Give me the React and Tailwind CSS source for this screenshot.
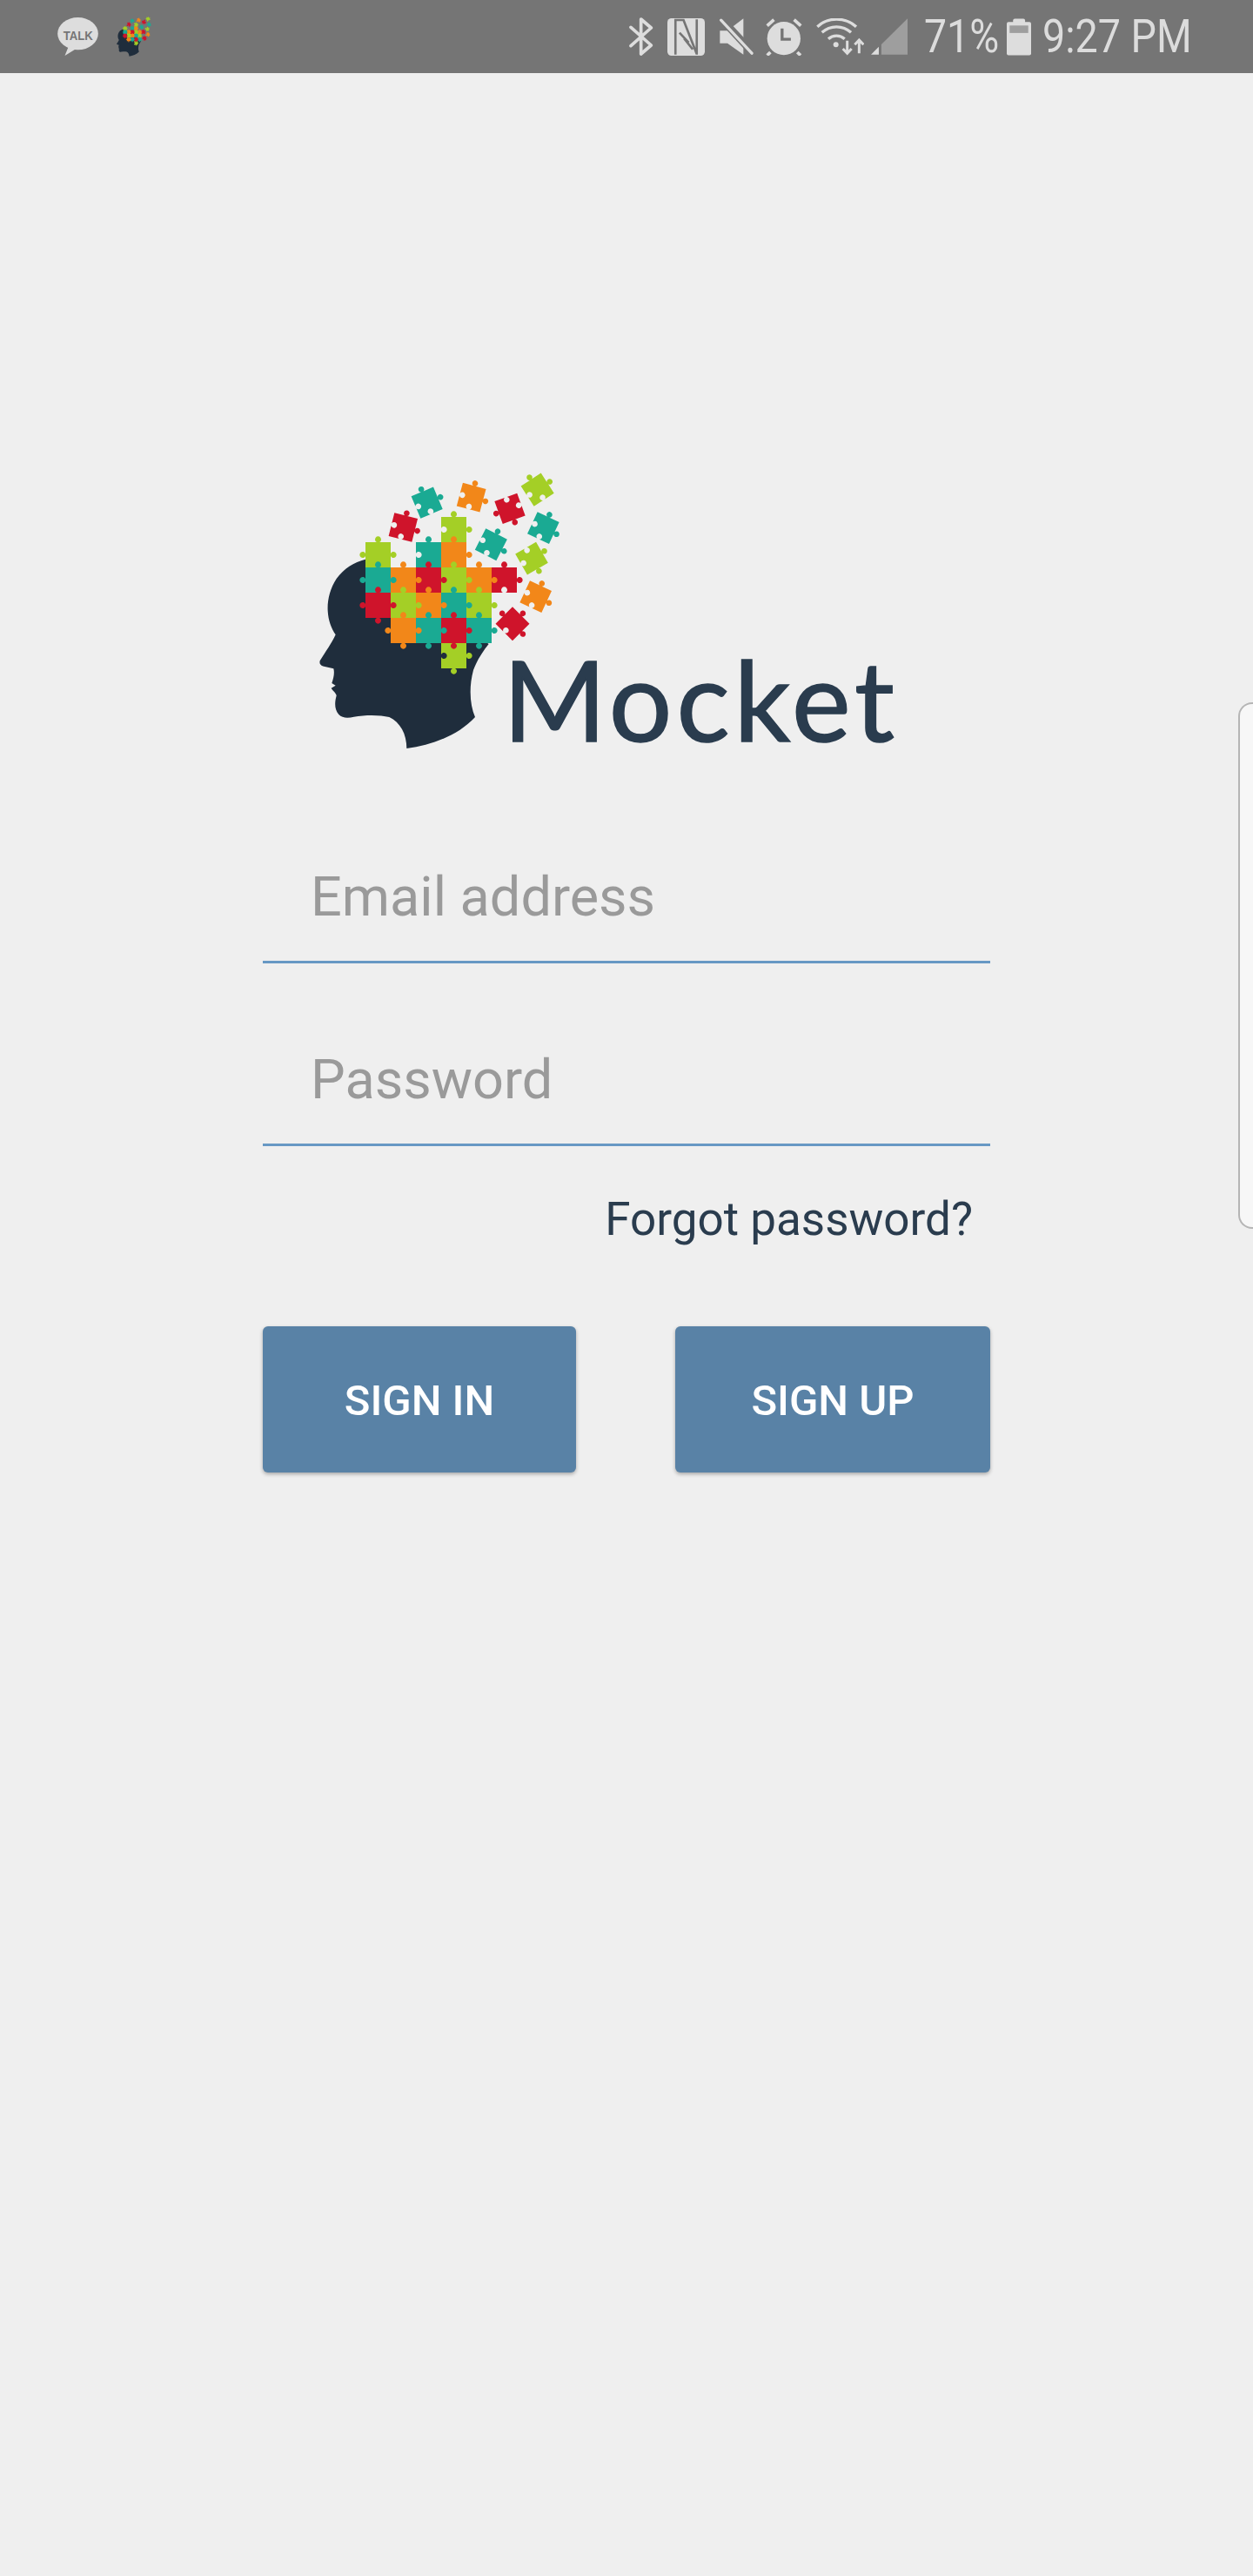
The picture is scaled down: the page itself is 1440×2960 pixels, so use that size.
const BAR = "#757575";
const ICON = "#dddddd";
const DIM = "#9e9e9e";
const TEAL = "#1aaa93";
const LIME = "#a4cf26";
const ORANGE = "#f28719";
const RED = "#cf142b";
const CELL = 87;

// puzzle piece centred on 0,0. each edge is k (knob), n (notch) or f (flat)
function piecePath(t, r, b, l) {
  const h = CELL / 2;
  const n = 4.5;
  const k = 10.5;
  const arc = (type, x, y) =>
    type === "f"
      ? `L${x} ${y}`
      : `A${k} ${k} 0 1 ${type === "k" ? 1 : 0} ${x} ${y}`;
  return [
    `M${-h} ${-h}`,
    `L${-n} ${-h}`,
    arc(t, n, -h),
    `L${h} ${-h}`,
    `L${h} ${-n}`,
    arc(r, h, n),
    `L${h} ${h}`,
    `L${n} ${h}`,
    arc(b, -n, h),
    `L${-h} ${h}`,
    `L${-h} ${n}`,
    arc(l, -h, -n),
    "Z",
  ].join(" ");
}

// x, y = top-left corner of the cell in the logo's coordinates
const GRID = [
  [501, 222, LIME, "kkfn"],
  [240, 309, LIME, "kkfk"],
  [414, 309, TEAL, "kkfn"],
  [501, 309, ORANGE, "kkff"],
  [675, 396, RED, "kknf"],
  [588, 396, ORANGE, "kkff"],
  [501, 396, LIME, "kkff"],
  [414, 396, RED, "kkff"],
  [327, 396, ORANGE, "kkff"],
  [240, 396, TEAL, "kkfk"],
  [588, 483, LIME, "kkff"],
  [501, 483, TEAL, "kkff"],
  [414, 483, ORANGE, "kkff"],
  [327, 483, LIME, "kkff"],
  [240, 483, RED, "kkkk"],
  [501, 657, LIME, "fkkn"],
  [588, 570, TEAL, "kkkf"],
  [501, 570, RED, "kkkf"],
  [414, 570, TEAL, "kkkf"],
  [327, 570, ORANGE, "kkkk"],
];

// cx, cy, rotation, colour, edges
const LOOSE = [
  [452, 173, -23, TEAL, "kknn"],
  [605, 155, 15, ORANGE, "kknn"],
  [370, 258, 14, RED, "kknn"],
  [738, 193, -20, RED, "nnkk"],
  [833, 128, -33, LIME, "kknn"],
  [853, 260, 25, TEAL, "kknn"],
  [673, 317, 27, TEAL, "kknn"],
  [813, 365, -30, LIME, "nkkn"],
  [827, 497, 25, ORANGE, "kknn"],
  [747, 590, 45, RED, "kknk"],
];

function edges(code) {
  return code.split("").map((c) => (c === "k" || c === "n" ? c : "f"));
}

function HeadLogo({ className, x0 = 0, y0 = 0, w = 1020, h = 1080 }) {
  return (
    <svg viewBox={`${x0} ${y0} ${w} ${h}`} className={className}>
      <path
        fill="#1f2d3c"
        d="M240 368 C200 378 165 400 140 435 C118 468 108 510 110 545 C112 580 122 605 137 628 C125 655 100 690 83 718 C80 730 88 736 100 738 L130 745 C134 760 130 778 124 795 L137 803 L122 812 C128 822 140 830 140 838 C134 860 132 885 148 903 C160 916 180 916 200 911 C240 904 290 904 322 912 C360 930 382 970 382 1020 C470 1008 560 975 618 912 C600 870 596 810 612 750 C625 715 645 685 665 660 Z"
      />
      {GRID.map(([x, y, color, code], i) => {
        const [t, r, b, l] = edges(code);
        return (
          <path
            key={i}
            fill={color}
            transform={`translate(${x + CELL / 2} ${y + CELL / 2})`}
            d={piecePath(t, r, b, l)}
          />
        );
      })}
      {LOOSE.map(([cx, cy, rot, color, code], i) => {
        const [t, r, b, l] = edges(code);
        return (
          <path
            key={i}
            fill={color}
            transform={`translate(${cx} ${cy}) rotate(${rot}) scale(0.95)`}
            d={piecePath(t, r, b, l)}
          />
        );
      })}
    </svg>
  );
}

function TalkIcon() {
  return (
    <svg viewBox="0 0 140 132" className="w-[47px] h-[44px] overflow-visible">
      <ellipse cx="70" cy="56" rx="70" ry="56" fill={ICON} />
      <path d="M38 100 L25 132 L64 108 Z" fill={ICON} />
      <text
        x="20"
        y="77"
        fill={BAR}
        fontFamily="Liberation Sans"
        fontWeight="700"
        fontSize="46"
        textLength="102"
        lengthAdjust="spacingAndGlyphs"
      >
        TALK
      </text>
    </svg>
  );
}

function BluetoothIcon() {
  return (
    <svg viewBox="0 0 84 132" className="w-[28px] h-[44px]" fill="none" stroke={ICON} strokeWidth="11" strokeLinejoin="round" strokeLinecap="round">
      <path d="M6 34 L76 96 L41 126 L41 6 L76 36 L6 98" />
    </svg>
  );
}

function NfcIcon() {
  return (
    <svg viewBox="0 0 130 130" className="w-[43px] h-[43px]">
      <rect width="130" height="130" rx="14" fill={ICON} />
      <path d="M28 126 V6 H56 L102 124 M102 4 V126 M42 50 L74 84 L58 70 L88 108" fill="none" stroke={BAR} strokeWidth="8" />
    </svg>
  );
}

function MuteIcon() {
  return (
    <svg viewBox="0 0 120 125" className="w-[40px] h-[42px]">
      <path d="M4 42 V86 H30 L85 125 V0 L30 42 Z" fill={ICON} />
      <path d="M4 -4 L124 126" stroke={BAR} strokeWidth="26" />
      <path d="M8 6 L114 120" stroke={ICON} strokeWidth="10" strokeLinecap="round" />
    </svg>
  );
}

function AlarmIcon() {
  return (
    <svg viewBox="0 0 125 128" className="w-[42px] h-[43px]">
      <circle cx="62" cy="69" r="57" fill={ICON} />
      <path d="M5 26 L28 5 M97 5 L120 26 M16 116 L5 127 M108 116 L119 127" stroke={ICON} strokeWidth="11" />
      <path d="M56 35 V72 H86" fill="none" stroke={BAR} strokeWidth="10" />
    </svg>
  );
}

function WifiIcon() {
  return (
    <svg viewBox="0 0 165 127" className="w-[55px] h-[43px]" fill="none" stroke={ICON} strokeWidth="10">
      <path d="M4 28 C40 -6 100 -6 138 28" />
      <path d="M20 48 C48 22 92 22 120 48" />
      <path d="M42 70 C58 56 82 56 98 70" />
      <circle cx="68" cy="90" r="9" fill={ICON} stroke="none" />
      <path d="M107 76 V120 M92 104 L107 120 L122 104" strokeWidth="9" />
      <path d="M148 120 V74 M133 90 L148 74 L163 90" strokeWidth="9" />
    </svg>
  );
}

function SignalIcon() {
  return (
    <svg viewBox="0 0 127 125" className="w-[42px] h-[42px]">
      <path d="M0 125 L27 125 L27 98 Z" fill={ICON} />
      <path d="M36 125 L127 125 L127 0 L36 90 Z" fill={DIM} />
    </svg>
  );
}

function BatteryIcon() {
  return (
    <svg viewBox="0 0 85 128" className="w-[28px] h-[43px]">
      <rect x="22" width="42" height="22" rx="6" fill={ICON} />
      <rect y="12" width="85" height="116" rx="6" fill={ICON} />
      <rect x="10" y="24" width="65" height="26" fill={DIM} />
    </svg>
  );
}

function StatusBar() {
  return (
    <div className="h-[84px] bg-[#757575] flex items-center pl-[66px] pr-[75px] text-[#dcdcdc]">
      <TalkIcon />
      <HeadLogo className="ml-[21px] w-[40px] h-[46px]" x0={80} y0={70} w={835} h={950} />
      <div className="ml-auto flex items-center">
        <BluetoothIcon />
        <div className="ml-[16px]"><NfcIcon /></div>
        <div className="ml-[16px]"><MuteIcon /></div>
        <div className="ml-[14px]"><AlarmIcon /></div>
        <div className="ml-[16px]"><WifiIcon /></div>
        <div className="ml-[8px]"><SignalIcon /></div>
        <span className="ml-[19px] w-[84px] origin-left scale-x-[0.875] whitespace-nowrap text-[53px] leading-[62px]">71%</span>
        <div className="ml-[11px]"><BatteryIcon /></div>
        <span className="ml-[13px] w-[167px] origin-left scale-x-[0.88] whitespace-nowrap text-[53px] leading-[62px]">9:27 PM</span>
      </div>
    </div>
  );
}

function Field({ label }) {
  return (
    <div className="h-[210px] flex items-end border-b-[3px] border-[#6798c4] pl-[55px] pb-[36px] text-[63px] leading-[74px] text-[#9a9a9a]">
      {label}
    </div>
  );
}

function AuthButton({ label, className }) {
  return (
    <button className={`h-[168px] pt-[3px] rounded-md bg-[#5982a6] shadow-[0_2px_4px_rgba(0,0,0,0.3)] text-white text-[49px] font-medium ${className}`}>
      {label}
    </button>
  );
}

export default function App() {
  return (
    <div className="relative w-[1440px] h-[2960px] overflow-hidden bg-[#efefef] font-['Roboto',sans-serif]">
      <StatusBar />

      <div className="ml-[302px] w-[836px] pt-[436px]">
        <div className="flex items-start">
          <HeadLogo className="ml-[38px] w-[340px] h-[360px] shrink-0" />
          <span className="ml-[-102px] mt-[206px] font-['Lato',sans-serif] tracking-[5px] text-[128px] leading-[154px] text-[#2a3c4e] [-webkit-text-stroke:1.5px_#2a3c4e]">
            Mocket
          </span>
        </div>

        <div className="mt-[17px]">
          <Field label="Email address" />
          <Field label="Password" />
        </div>

        <div className="mt-[53px] pr-[20px] text-right text-[53px] leading-[62px] text-[#2a3c4e]">
          Forgot password?
        </div>

        <div className="mt-[92px] flex justify-between">
          <AuthButton label="SIGN IN" className="w-[360px]" />
          <AuthButton label="SIGN UP" className="w-[362px]" />
        </div>
      </div>

      {/* edge panel handle */}
      <div className="absolute right-0 top-[807px] w-[17px] h-[605px] rounded-l-2xl border-y-2 border-l-2 border-[#b5b5b5] bg-[#f7f7f7]" />
    </div>
  );
}
